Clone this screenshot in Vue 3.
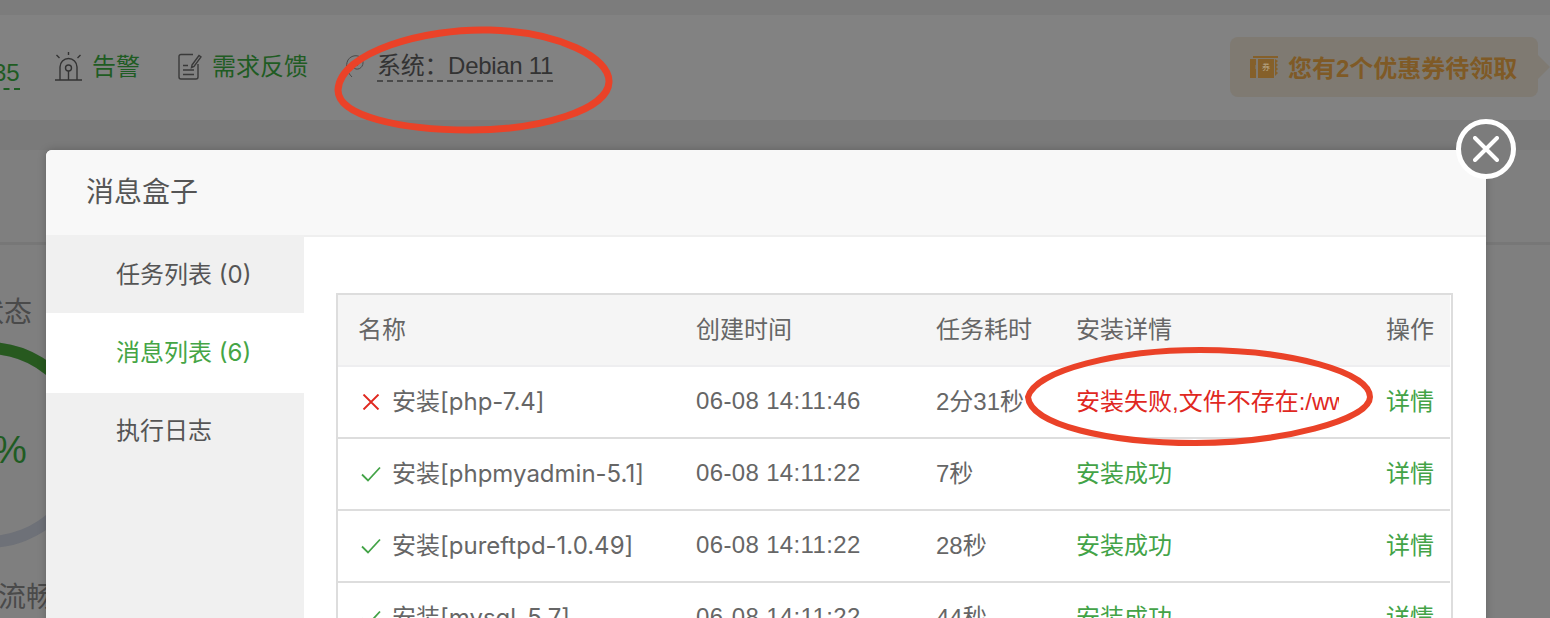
<script setup>
const rows = [
  { name: '安装[php-7.4]', time: '06-08 14:11:46', cost: '2分31秒', detail: '安装失败,文件不存在:/www', ok: false },
  { name: '安装[phpmyadmin-5.1]', time: '06-08 14:11:22', cost: '7秒', detail: '安装成功', ok: true },
  { name: '安装[pureftpd-1.0.49]', time: '06-08 14:11:22', cost: '28秒', detail: '安装成功', ok: true },
  { name: '安装[mysql-5.7]', time: '06-08 14:11:22', cost: '44秒', detail: '安装成功', ok: true },
]
</script>

<template>
  <div class="root">
    <div class="strip"></div>
    <header class="topbar">
      <span class="num">35</span>
      <svg class="ico-alert" viewBox="0 0 27 30" fill="none" stroke="#333" stroke-width="1.4">
        <path d="M0 29H27M5 29V16a8.5 8.5 0 0 1 17 0V29M13.5 20V29M13.5 1V4M1.5 4l3 3M25.5 4l-3 3" />
        <circle cx="13.5" cy="17" r="3" />
      </svg>
      <span class="link alert-text">告警</span>
      <svg class="ico-doc" viewBox="0 0 24 27" fill="none" stroke="#3a3a3a" stroke-width="1.4">
        <path d="M15 1.500H3a2 2 0 0 0-2 2V24a2 2 0 0 0 2 2h15a2 2 0 0 0 2-2V11" />
        <path d="M14 12L21 2.500l2 1.500-7 9.500-2.500 1z" />
        <path d="M5 12.500h5M5 17h11M5 21.500h11" />
      </svg>
      <span class="link doc-text">需求反馈</span>
      <svg class="ico-deb" viewBox="0 0 20 24" fill="none" stroke="#4a4a4a" stroke-width="1">
        <path d="M7 23C2 18 0 12 3 6C6 1 14 0 17 5C20 10 16 16 11 15C7 14 7 9 10 8C13 7 14 10 12 12" />
      </svg>
      <span class="sys">系统：Debian 11</span>
      <div class="coupon">
        <span class="coupon-ico">
          <svg viewBox="0 0 30 22" width="30" height="22" fill="#85602a">
            <path d="M3 0H28V2H3ZM0 3H6V9L5 10 6 11 5 12 6 13V22H0ZM8 3H24V22H8ZM25 3l3 2-2 2 2 2-2 2 2 2-2 2 2 2-2 2-1 1Z" />
          </svg>
          <span class="coupon-q">券</span>
        </span>
        <span>您有2个优惠券待领取</span>
        <i class="coupon-caret"></i>
      </div>
    </header>
    <div class="band"></div>
    <section class="panel">
      <div class="panel-head"></div>
      <div class="gauge">
        <div class="g-title">状态</div>
        <div class="g-ring">
          <svg viewBox="0 0 206 206" width="206" height="206" fill="none" stroke-width="12">
            <circle cx="103" cy="103" r="97" stroke="#6e7178" />
            <path d="M103 6A97 97 0 0 1 190 60" stroke="#27591f" />
          </svg>
          <span class="g-val">%</span>
        </div>
        <div class="g-label">流畅</div>
      </div>
    </section>

    <div class="modal">
      <div class="modal-head">消息盒子</div>
      <div class="modal-body">
        <aside class="side">
          <div class="side-item">任务列表 (0)</div>
          <div class="side-item on">消息列表 (6)</div>
          <div class="side-item last">执行日志</div>
        </aside>
        <main class="main">
          <div class="tbl-wrap">
            <table class="tbl">
              <colgroup>
                <col class="c1" /><col class="c2" /><col class="c3" /><col class="c4" /><col class="c5" />
              </colgroup>
              <thead>
                <tr><th>名称</th><th>创建时间</th><th>任务耗时</th><th>安装详情</th><th>操作</th></tr>
              </thead>
              <tbody>
                <tr v-for="r in rows" :key="r.name">
                  <td>
                    <div class="name">
                      <svg v-if="r.ok" class="st" viewBox="0 0 20 16" fill="none" stroke="#43a347" stroke-width="1.800"><path d="M1 8.500l6 6L19 1.500" /></svg>
                      <svg v-else class="st" viewBox="0 0 20 16" fill="none" stroke="#e0281f" stroke-width="1.900"><path d="M2.500 .5l15 15M17.500 .5l-15 15" /></svg>
                      <span>{{ r.name }}</span>
                    </div>
                  </td>
                  <td class="date">{{ r.time }}</td>
                  <td>{{ r.cost }}</td>
                  <td><div class="detail" :class="r.ok ? 'good' : 'bad'">{{ r.detail }}</div></td>
                  <td class="good">详情</td>
                </tr>
              </tbody>
            </table>
          </div>
        </main>
      </div>
    </div>

    <button class="close" type="button" aria-label="关闭">
      <svg viewBox="0 0 26 26" width="26" height="26" fill="none" stroke="#fff" stroke-width="4" stroke-linecap="round"><path d="M2 2l22 22M24 2L2 24" /></svg>
    </button>

    <svg class="marks" viewBox="0 0 1550 618" fill="none" stroke="#ea4228">
      <path stroke-width="7" d="M338 90C340 52 425 28 490 30C560 32 610 58 609 82C608 110 540 130 470 130C400 130 338 116 338 90Z" />
      <path stroke-width="6" d="M1028 397C1035 370 1120 350 1200 350C1290 350 1370 372 1370 397C1370 420 1280 443 1195 443C1110 443 1030 425 1028 397Z" />
    </svg>
  </div>
</template>

<style>
html, body { margin: 0; overflow: hidden; background: #7f7f7f; }
</style>

<style scoped>
.root {
  position: relative;
  width: 1550px;
  height: 618px;
  overflow: hidden;
  display: flex;
  flex-direction: column;
  background: #7f7f7f;
  font-family: "Liberation Sans", "Noto Sans CJK SC", sans-serif;
  font-size: 24px;
  color: #555;
}
.strip { height: 15px; background: #7c7c7c; flex: none; }
.topbar {
  height: 105px;
  flex: none;
  background: #828282;
  display: flex;
  align-items: center;
  padding-bottom: 2px;
  box-sizing: border-box;
  color: #333;
}
.num {
  margin-left: -7px;
  width: 27px;
  color: #1f5c23;
  line-height: 31px;
  padding-top: 6px;
  border-bottom: 2px dashed #1f5c23;
  position: relative;
  top: 4px;
}
.ico-alert { width: 27px; height: 30px; margin-left: 35px; margin-bottom: 2px; }
.link { color: #1f5c23; line-height: 30px; }
.alert-text { margin-left: 10px; }
.ico-doc { width: 24px; height: 27px; margin-left: 38px; }
.doc-text { margin-left: 10px; }
.ico-deb { width: 20px; height: 24px; margin-left: 37px; margin-bottom: 2px; }
.sys {
  margin-left: 12px;
  color: #333;
  line-height: 28px;
  letter-spacing: -0.3px;
  border-bottom: 2px dashed #4a4a4a;
}
.coupon {
  margin-left: auto;
  margin-right: 12px;
  width: 308px;
  height: 60px;
  position: relative;
  box-sizing: border-box;
  padding-left: 20px;
  background: #7f7a72;
  border-radius: 8px;
  display: flex;
  align-items: center;
  gap: 8px;
  color: #7f5a26;
  font-weight: 700;
  font-size: 24px;
}
.coupon-ico {
  position: relative;
  width: 30px;
  height: 22px;
  display: flex;
  align-items: center;
  justify-content: center;
}
.coupon-ico svg { position: absolute; left: 0; top: 0; }
.coupon-q { position: relative; font-size: 8px; color: #b9a98a; line-height: 1; font-weight: 400; margin-left: 2px; margin-top: 2px; }
.coupon-caret {
  position: absolute;
  left: 100%;
  top: 18px;
  border: 12px solid transparent;
  border-left-color: #7f7a72;
  border-right: 0;
}
.band { height: 30px; flex: none; background: #7a7a7a; }
.panel { flex: 1; min-height: 0; }
.panel-head { height: 95px; box-sizing: border-box; border-bottom: 3px solid #777; }
.gauge { margin-left: -115px; width: 206px; }
.g-title, .g-label { font-size: 28px; line-height: 36px; color: #4a4a4a; white-space: nowrap; }
.g-title { margin-top: 50px; padding-left: 91px; }
.g-label { margin-top: 32px; padding-left: 113px; }
.g-ring { position: relative; margin-top: 11px; height: 206px; }
.g-ring svg { display: block; }
.g-val {
  position: absolute;
  left: 108px;
  top: 86px;
  font-size: 38px;
  line-height: 44px;
  color: #1f5c23;
}

.modal {
  position: absolute;
  left: 46px;
  top: 150px;
  width: 1440px;
  height: 620px;
  background: #fff;
  border-radius: 6px 6px 0 0;
  box-shadow: 0 0 8px rgba(0, 0, 0, 0.22);
  display: flex;
  flex-direction: column;
  overflow: hidden;
}
.modal-head {
  height: 85px;
  flex: none;
  background: #f8f8f8;
  padding-left: 40px;
  font-size: 28px;
  line-height: 85px;
  color: #555;
}
.modal-body { flex: 1; display: flex; min-height: 0; }
.side { width: 258px; flex: none; background: #f0f0f0; }
.side-item { height: 78px; line-height: 80px; padding-left: 70px; color: #555; font-family: Inter, "Noto Sans CJK SC", sans-serif; }
.side-item.on { height: 80px; line-height: 79px; background: #fff; color: #45a545; }
.side-item.last { height: 74px; line-height: 76px; }
.main {
  flex: 1;
  border-top: 2px solid #efefef;
  padding: 56px 33px 0 32px;
  min-width: 0;
}
.tbl-wrap {
  border: 2px solid #ddd;
  padding-right: 1px;
  border-bottom: 0;
}
.tbl {
  width: 1112px;
  table-layout: fixed;
  border-collapse: separate;
  border-spacing: 0;
}
.c1 { width: 336px; }
.c2 { width: 241px; }
.c3 { width: 140px; }
.c4 { width: 310px; }
.c5 { width: 85px; }
th, td {
  height: 72px;
  box-sizing: border-box;
  padding: 0 0 0 21px;
  text-align: left;
  font-weight: 400;
  color: #666;
  white-space: nowrap;
  line-height: 30px;
}
th:first-child, td:first-child { padding-left: 20px; }
th:nth-child(2), td:nth-child(2) { padding-left: 22px; }
th { background: #f5f5f5; border-bottom: 2px solid #eeeef0; }
td { border-bottom: 2px solid #ddd; }
.name { display: flex; align-items: center; gap: 11px; font-family: Inter, "Noto Sans CJK SC", sans-serif; }
.st { width: 20px; height: 16px; flex: none; margin-left: 3px; }
td.date { letter-spacing: 0.35px; padding-bottom: 2px; }
.detail { width: 263px; overflow: hidden; }
td.good, .good { color: #43a347; }
.bad { color: #e0281f; }

.close {
  position: absolute;
  left: 1456px;
  top: 119px;
  width: 60px;
  height: 60px;
  box-sizing: border-box;
  border: 5px solid #fff;
  border-radius: 50%;
  background: #7c7c7c;
  padding: 0;
  display: flex;
  align-items: center;
  justify-content: center;
}
.marks {
  position: absolute;
  left: 0;
  top: 0;
  width: 1550px;
  height: 618px;
  pointer-events: none;
}
</style>
